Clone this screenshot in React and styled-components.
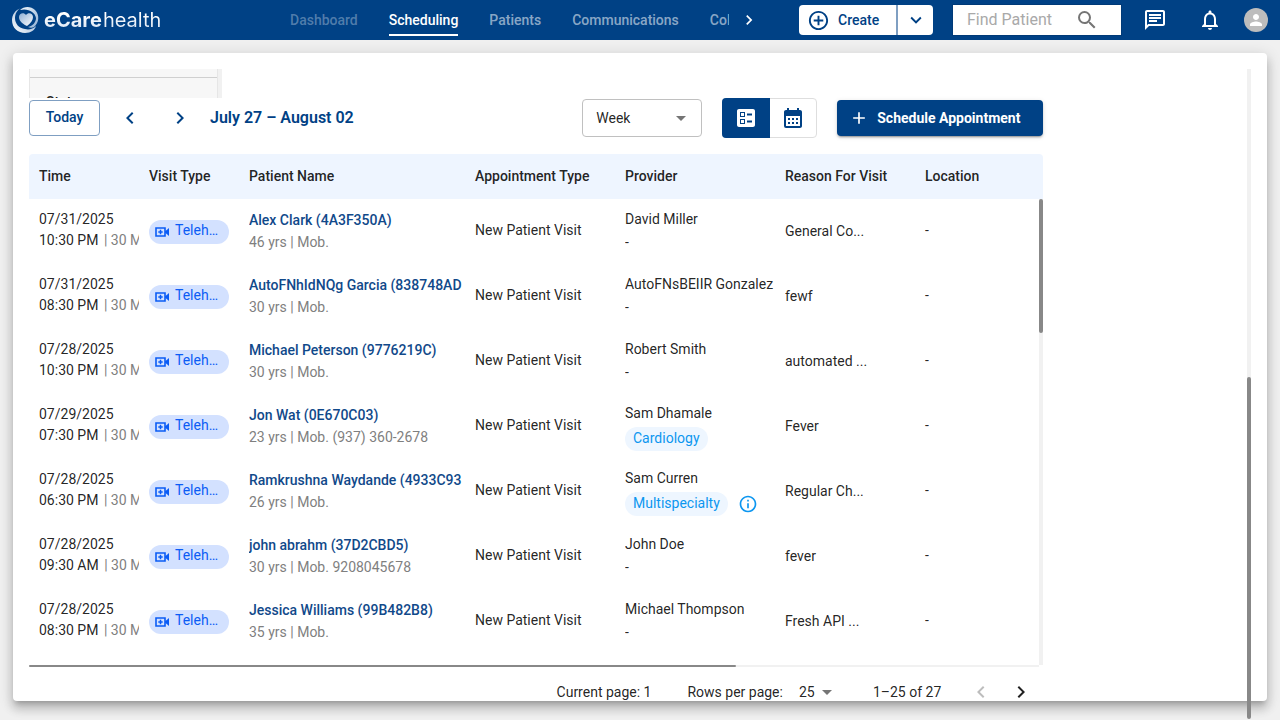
import React from "react";
import styled, { createGlobalStyle } from "styled-components";
import {
  MdOutlineAddCircleOutline, MdExpandMore, MdSearch, MdOutlineChat, MdOutlineNotifications,
  MdPerson, MdChevronRight, MdChevronLeft, MdBallot, MdCalendarMonth, MdAdd,
  MdArrowDropDown, MdOutlineInfo,
} from "react-icons/md";

const BLUE = "#004185";

const Global = createGlobalStyle`
  *, *::before, *::after { box-sizing: border-box; }
  body { margin: 0; background: #f0f0f0; color: rgba(0, 0, 0, 0.87); font: 400 14px/20px Roboto, "Liberation Sans", sans-serif; overflow: hidden; }
  button, input, select { font: inherit; color: inherit; }
  button { cursor: pointer; }
`;

const Page = styled.div`
  height: 100vh;
  display: flex;
  flex-direction: column;
`;

const TopBar = styled.header`
  height: 40px;
  flex: none;
  display: flex;
  align-items: center;
  padding: 0 12px;
  background: ${BLUE};
  color: #fff;
`;

const Brand = styled.a`
  display: flex;
  align-items: center;
  gap: 4px;
  width: 278px;
  flex: none;
  color: #fff;
  text-decoration: none;
  font: 400 20px/24px Inter, sans-serif;
  b { margin-right: 1px; font-weight: 700; }
`;

const Wordmark = styled.span`
  background: linear-gradient(180deg, #fff 30%, #d5e2f2);
  background-clip: text;
  color: transparent;
`;

const Nav = styled.nav`
  flex: 1;
  min-width: 0;
  display: flex;
  gap: 31px;
  overflow: hidden;
`;

const NavLink = styled.a`
  flex: none;
  height: 32px;
  padding-top: 6px;
  font-weight: 500;
  text-decoration: none;
  color: ${(p) => (p.$active ? "#fff" : p.$dim ? "rgba(255,255,255,0.32)" : "rgba(255,255,255,0.55)")};
  border-bottom: 2px solid ${(p) => (p.$active ? "#fff" : "transparent")};
`;

const IconButton = styled.button`
  display: flex;
  align-items: center;
  justify-content: center;
  flex: none;
  width: ${(p) => p.$w || 40}px;
  height: ${(p) => p.$h || 32}px;
  padding: 0;
  border: 0;
  background: none;
  color: ${(p) => p.$color || "inherit"};
`;

const SplitButton = styled.div`
  display: flex;
  flex: none;
  height: 30px;
  margin-left: 30px;
  border-radius: 4px;
  overflow: hidden;
  background: #fff;
  color: ${BLUE};
`;

const SplitPart = styled.button`
  display: flex;
  align-items: center;
  gap: 8px;
  width: ${(p) => p.$w}px;
  padding: 0 0 0 ${(p) => (p.$divided ? 8 : 7)}px;
  border: 0;
  border-right: ${(p) => (p.$divided ? "2px solid #7f9fc2" : "0")};
  background: none;
  font-weight: 500;
`;

const SearchBox = styled.label`
  display: flex;
  align-items: center;
  flex: none;
  width: 168px;
  height: 30px;
  margin: 0 13px 0 20px;
  padding: 0 22px 0 14px;
  background: #fff;
  color: #757575;
  outline: 1px solid #003a78;
  input {
    flex: 1;
    min-width: 0;
    padding: 0;
    border: 0;
    outline: 0;
    background: none;
    font-size: 16px;
  }
  input::placeholder { color: #a9a9a9; opacity: 1; }
`;

const Avatar = styled.span`
  display: flex;
  align-items: center;
  justify-content: center;
  width: 24px;
  height: 24px;
  border-radius: 50%;
  background: #bdbdbd;
  color: #fff;
`;

const Card = styled.main`
  flex: 1;
  min-height: 0;
  display: flex;
  justify-content: space-between;
  margin: 13px 13px 19px;
  padding: 16px 16px 0;
  border-radius: 4px;
  background: #fff;
  box-shadow: 0 5px 5px -3px rgba(0,0,0,0.2), 0 8px 10px 1px rgba(0,0,0,0.14), 0 3px 14px 2px rgba(0,0,0,0.12);
`;

const Content = styled.div`
  width: 83%;
  min-width: 0;
  display: flex;
  flex-direction: column;
`;

const Filters = styled.div`
  display: flex;
  flex: none;
  width: 193px;
  height: 29px;
  overflow: hidden;
`;

const FilterPanel = styled.div`
  flex: 1;
  border: solid #e6e6e6;
  border-width: 0 1px;
  background: #f7f7f7;
`;

const FilterTitle = styled.div`
  margin-top: 8px;
  padding: 14px 16px;
  border-top: 1px solid #d0d0d0;
  font-weight: 500;
`;

const Track = styled.div`
  flex: none;
  display: flex;
  align-items: ${(p) => p.$align || "flex-start"};
  width: ${(p) => (p.$horizontal ? "auto" : "4px")};
  height: ${(p) => (p.$horizontal ? "2px" : "auto")};
  margin-right: ${(p) => (p.$horizontal ? 4 : 0)}px;
  margin-bottom: ${(p) => p.$overhang || 0}px;
  background: #f1f1f1;
`;

const Thumb = styled.div`
  width: ${(p) => p.$w || "100%"};
  height: ${(p) => p.$h || "100%"};
  border-radius: 2px;
  background: #888;
`;

const Toolbar = styled.div`
  display: flex;
  align-items: center;
  flex: none;
  height: 40px;
  margin-bottom: 16px;
  color: ${BLUE};
`;

const TodayButton = styled.button`
  width: 71px;
  height: 36px;
  margin-right: 10px;
  padding: 0 0 2px;
  border: 1px solid #7f9fc2;
  border-radius: 4px;
  background: #fff;
  font-weight: 500;
`;

const Range = styled.h1`
  flex: 1;
  margin: 0;
  font-size: 16px;
  line-height: 24px;
  font-weight: 600;
`;

const SelectWrap = styled.div`
  position: relative;
  display: flex;
  align-items: center;
  margin-right: ${(p) => p.$gap}px;
  color: rgba(0, 0, 0, 0.87);
  select {
    appearance: none;
    width: ${(p) => p.$w}px;
    height: ${(p) => p.$h}px;
    padding: 0 ${(p) => p.$pad}px;
    border: ${(p) => (p.$outlined ? "1px solid #c0c0c0" : "0")};
    border-radius: 4px;
    background: transparent;
  }
  svg {
    position: absolute;
    right: ${(p) => (p.$outlined ? 9 : 0)}px;
    color: #757575;
    pointer-events: none;
  }
`;

const Toggle = styled.div`
  display: flex;
  width: 95px;
  height: 40px;
  margin-right: 20px;
  border: 1px solid #dedede;
  border-radius: 4px;
`;

const ToggleButton = styled.button`
  display: flex;
  align-items: center;
  justify-content: center;
  flex: ${(p) => (p.$active ? "0 0 48px" : "1")};
  margin: ${(p) => (p.$active ? "-1px 0 -1px -1px" : "0")};
  padding: 0;
  border: 0;
  border-radius: ${(p) => (p.$active ? "4px 0 0 4px" : "0")};
  background: ${(p) => (p.$active ? BLUE : "transparent")};
  color: ${(p) => (p.$active ? "#fff" : BLUE)};
`;

const PrimaryButton = styled.button`
  display: flex;
  align-items: center;
  gap: 8px;
  width: 206px;
  height: 36px;
  padding: 0 12px;
  border: 0;
  border-radius: 4px;
  background: ${BLUE};
  color: #fff;
  font-weight: 700;
  white-space: nowrap;
  box-shadow: 0 3px 1px -2px rgba(0,0,0,0.2), 0 2px 2px rgba(0,0,0,0.14), 0 1px 5px rgba(0,0,0,0.12);
`;

const TableArea = styled.div`
  flex: 1;
  min-height: 0;
  display: flex;
  position: relative;
  overflow: hidden;
`;

const BodyScroll = styled.div`
  position: absolute;
  top: 45px;
  right: 0;
  bottom: 0;
  display: flex;
`;

const Table = styled.table`
  width: 100%;
  height: 0;
  table-layout: fixed;
  border-collapse: separate;
  border-spacing: 0;
`;

const Th = styled.th`
  width: ${(p) => (p.$w ? `${p.$w}px` : "auto")};
  height: 45px;
  padding: 0 0 2px 10px;
  background: #eef5ff;
  text-align: left;
  font-weight: 500;
  white-space: nowrap;
  &:first-child { border-top-left-radius: 4px; }
  &:last-child { border-top-right-radius: 4px; }
`;

const Td = styled.td`
  height: 65px;
  padding: 0 0 ${(p) => p.$pb ?? 2}px 10px;
  vertical-align: middle;
  white-space: nowrap;
`;

const Line = styled.div`
  overflow: hidden;
  line-height: ${(p) => p.$h || 21}px;
  color: ${(p) => (p.$muted ? "#7f7f7f" : "inherit")};
  span { margin-left: 2px; color: #7f7f7f; }
`;

const PatientLink = styled.a`
  color: #11498a;
  font-weight: 500;
  text-decoration: none;
`;

const VisitPill = styled.span`
  display: flex;
  align-items: center;
  gap: 5px;
  width: 80px;
  height: 24px;
  margin-top: 3px;
  padding: 0 5px;
  border-radius: 12px;
  background: #d3e1ff;
  color: #0b5cf5;
  span { padding-bottom: 4px; }
`;

const SpecialtyRow = styled.div`
  display: flex;
  align-items: center;
  gap: 10px;
  margin-top: 3px;
  color: #0c96f0;
`;

const Specialty = styled.span`
  height: 24px;
  padding: 1px 8px;
  border-radius: 12px;
  background: #eef6ff;
`;

const Footer = styled.footer`
  display: flex;
  align-items: center;
  justify-content: flex-end;
  flex: none;
  height: 34px;
  padding: 16px 2px 0 0;
`;

const FooterText = styled.span`
  margin-right: ${(p) => p.$gap}px;
`;

const Logo = () => (
  <svg width="28" height="28" viewBox="0 0 28 28" aria-hidden="true">
    <defs>
      <linearGradient id="ring" x1="0" y1="1" x2="1" y2="0">
        <stop offset="0" stopColor="#fff" />
        <stop offset="1" stopColor="#7fa3cb" />
      </linearGradient>
      <linearGradient id="crescent" x1="0" y1="0" x2="1" y2="1">
        <stop offset="0" stopColor="#f4f8fc" />
        <stop offset="1" stopColor="#8fb0d4" />
      </linearGradient>
      <linearGradient id="heart" x1="0" y1="0" x2="1" y2="1">
        <stop offset="0" stopColor="#8fb0d4" />
        <stop offset="1" stopColor="#fff" />
      </linearGradient>
    </defs>
    <path fill="url(#ring)" d="M9 2C3 4 0 9 0 14c0 8 6 13 13 13 6 0 10-3 11-7-3 3-7 4-11 3C7 22 3 18 3 12c0-4 2-8 6-10z" />
    <path fill="url(#crescent)" d="M8 4c4-4 11-4 15 0 5 5 4 13-1 17-2 1-4 1-6 0 5-1 8-5 8-9C23 6 16 2 8 4z" />
    <path fill="url(#heart)" d="M15 20C9 17 7 14 7 11c0-4 5-5 7-2 2-3 7-2 7 2 0 3-2 6-6 9z" />
  </svg>
);

const VideoIcon = () => (
  <svg width="16" height="16" viewBox="0 0 16 16" fill="none" aria-hidden="true">
    <path d="M2 4h9v8H2z" stroke="currentColor" strokeWidth="1.6" />
    <path d="M11 7.5 15 4v8l-4-3.500z" fill="currentColor" />
    <path d="M6.500 5.800v4.400M4.300 8h4.400" stroke="currentColor" strokeWidth="1.500" />
  </svg>
);

const columns = [
  ["Time", 110], ["Visit Type", 100], ["Patient Name", 226], ["Appointment Type", 150],
  ["Provider", 160], ["Reason For Visit", 140], ["Location"],
];

const rows = [
  ["07/31/2025", "10:30 PM", "Alex Clark (4A3F350A)", "46 yrs | Mob.", "David Miller", null, "General Co..."],
  ["07/31/2025", "08:30 PM", "AutoFNhIdNQg Garcia (838748AD", "30 yrs | Mob.", "AutoFNsBEIIR Gonzalez", null, "fewf"],
  ["07/28/2025", "10:30 PM", "Michael Peterson (9776219C)", "30 yrs | Mob.", "Robert Smith", null, "automated ..."],
  ["07/29/2025", "07:30 PM", "Jon Wat (0E670C03)", "23 yrs | Mob. (937) 360-2678", "Sam Dhamale", "Cardiology", "Fever"],
  ["07/28/2025", "06:30 PM", "Ramkrushna Waydande (4933C93", "26 yrs | Mob.", "Sam Curren", "Multispecialty", "Regular Ch..."],
  ["07/28/2025", "09:30 AM", "john abrahm (37D2CBD5)", "30 yrs | Mob. 9208045678", "John Doe", null, "fever"],
  ["07/28/2025", "08:30 PM", "Jessica Williams (99B482B8)", "35 yrs | Mob.", "Michael Thompson", null, "Fresh API ..."],
];

function AppointmentRow({ row }) {
  const [date, time, patient, details, provider, specialty, reason] = row;
  return (
    <tr>
      <Td $pb={4}>
        <Line>{date}</Line>
        <Line>{time} <span>| 30 Min</span></Line>
      </Td>
      <Td><VisitPill><VideoIcon /><span>Teleh…</span></VisitPill></Td>
      <Td>
        <Line $h={22}><PatientLink href="#patient">{patient}</PatientLink></Line>
        <Line $h={22} $muted>{details}</Line>
      </Td>
      <Td $pb={4}>New Patient Visit</Td>
      <Td $pb={0}>
        <Line>{provider}</Line>
        {specialty ? (
          <SpecialtyRow>
            <Specialty>{specialty}</Specialty>
            {specialty === "Multispecialty" && <MdOutlineInfo size={20} />}
          </SpecialtyRow>
        ) : <Line $h={24}>-</Line>}
      </Td>
      <Td>{reason}</Td>
      <Td $pb={4}>-</Td>
    </tr>
  );
}

export default function App() {
  return (
    <Page>
      <Global />
      <TopBar>
        <Brand href="#home">
          <Logo />
          <Wordmark><b>eCare</b>health</Wordmark>
        </Brand>
        <Nav>
          <NavLink href="#dashboard" $dim>Dashboard</NavLink>
          <NavLink href="#scheduling" $active>Scheduling</NavLink>
          <NavLink href="#patients">Patients</NavLink>
          <NavLink href="#communications">Communications</NavLink>
          <NavLink href="#col">Col</NavLink>
        </Nav>
        <IconButton aria-label="More tabs"><MdChevronRight size={20} /></IconButton>
        <SplitButton>
          <SplitPart $w={99} $divided><MdOutlineAddCircleOutline size={23} />Create</SplitPart>
          <SplitPart $w={35} aria-label="More create options"><MdExpandMore size={22} /></SplitPart>
        </SplitButton>
        <SearchBox>
          <input type="text" placeholder="Find Patient" aria-label="Find Patient" />
          <MdSearch size={24} />
        </SearchBox>
        <IconButton $w={42} aria-label="Messages"><MdOutlineChat size={24} /></IconButton>
        <IconButton $w={68} aria-label="Notifications"><MdOutlineNotifications size={24} /></IconButton>
        <IconButton $w={24} aria-label="Account"><Avatar><MdPerson size={18} /></Avatar></IconButton>
      </TopBar>
      <Card>
        <Content>
          <Filters>
            <FilterPanel><FilterTitle>Status</FilterTitle></FilterPanel>
            <Track />
          </Filters>
          <Toolbar>
            <TodayButton>Today</TodayButton>
            <IconButton aria-label="Previous week"><MdChevronLeft size={24} /></IconButton>
            <IconButton $w={60} aria-label="Next week"><MdChevronRight size={24} /></IconButton>
            <Range>July 27 – August 02</Range>
            <SelectWrap $w={120} $h={38} $pad={13} $gap={20} $outlined>
              <select aria-label="Period" defaultValue="Week"><option>Week</option></select>
              <MdArrowDropDown size={24} />
            </SelectWrap>
            <Toggle>
              <ToggleButton $active aria-label="List view"><MdBallot size={24} /></ToggleButton>
              <ToggleButton aria-label="Calendar view"><MdCalendarMonth size={24} /></ToggleButton>
            </Toggle>
            <PrimaryButton><MdAdd size={20} />Schedule Appointment</PrimaryButton>
          </Toolbar>
          <TableArea>
            <Table>
              <thead>
                <tr>{columns.map(([name, w]) => <Th key={name} $w={w}>{name}</Th>)}</tr>
              </thead>
              <tbody>{rows.map((row) => <AppointmentRow key={row[2]} row={row} />)}</tbody>
            </Table>
            <BodyScroll><Track><Thumb $h="134px" /></Track></BodyScroll>
          </TableArea>
          <Track $horizontal><Thumb $w="70%" /></Track>
          <Footer>
            <FooterText $gap={36}>Current page: 1</FooterText>
            <FooterText $gap={8}>Rows per page:</FooterText>
            <SelectWrap $w={48} $h={24} $pad={8} $gap={34}>
              <select aria-label="Rows per page" defaultValue="25"><option>25</option></select>
              <MdArrowDropDown size={24} />
            </SelectWrap>
            <FooterText $gap={20}>1–25 of 27</FooterText>
            <IconButton $color="#bdbdbd" $h={24} aria-label="Previous page"><MdChevronLeft size={24} /></IconButton>
            <IconButton $h={24} aria-label="Next page"><MdChevronRight size={24} /></IconButton>
          </Footer>
        </Content>
        <Track $align="flex-end" $overhang={-18}><Thumb $h="342px" /></Track>
      </Card>
    </Page>
  );
}
